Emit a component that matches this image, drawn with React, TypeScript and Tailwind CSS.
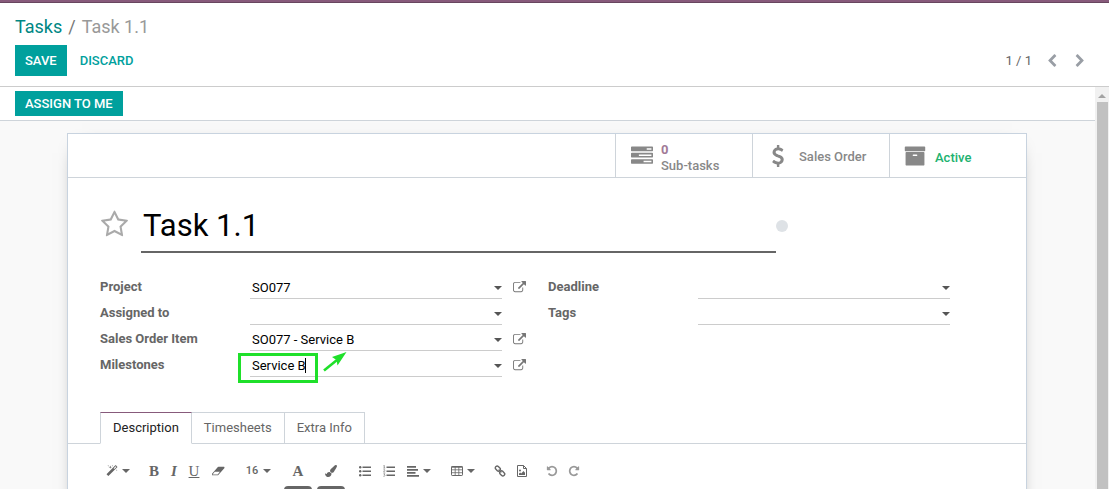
import { useState, type ReactNode } from "react";

const PATHS = {
  tasks:
    "M1024 1408h640v-128h-640v128zm-384-512h1024v-128h-1024v128zm640-512h384v-128h-384v128zm512 832v256q0 26-19 45t-45 19h-1664q-26 0-45-19t-19-45v-256q0-26 19-45t45-19h1664q26 0 45 19t19 45zm0-512v256q0 26-19 45t-45 19h-1664q-26 0-45-19t-19-45v-256q0-26 19-45t45-19h1664q26 0 45 19t19 45zm0-512v256q0 26-19 45t-45 19h-1664q-26 0-45-19t-19-45v-256q0-26 19-45t45-19h1664q26 0 45 19t19 45z",
  dollar:
    "M1362 1185q0 153-99.5 263.5t-258.5 136.5v175q0 14-9 23t-23 9h-135q-13 0-22.5-9.5t-9.5-22.5v-175q-66-9-127.5-31t-101.5-44.5-74-48-46.5-37.5-17.5-18q-17-21-2-41l103-135q7-10 23-12 15-2 24 9l2 2q113 99 243 125 37 8 74 8 81 0 142.5-43t61.5-122q0-28-15-53t-33.5-42-58.5-37.5-66-32-80-32.5q-39-16-61.5-25t-61.5-26.5-62.5-31-56.5-35.5-53.5-42.5-43.5-49-35.5-58-21-66.5-8.5-78q0-138 98-242t255-134v-180q0-13 9.5-22.5t22.5-9.5h135q14 0 23 9t9 23v176q57 6 110.5 23t87 33.5 63.5 37.5 39 29 15 14q17 18 5 38l-81 146q-8 15-23 16-14 3-27-7-3-3-14.5-12t-39-26.5-58.5-32-74.5-26-85.5-11.5q-95 0-155 43t-60 111q0 26 8.5 48t29.5 41.5 39.5 33 56 31 60.5 27 70 27.5q53 20 81 31.5t76 35 75.5 42.5 62 50 53 63.5 31.5 76.5 13 94z",
  archive:
    "M1088 832q0-26-19-45t-45-19h-256q-26 0-45 19t-19 45 19 45 45 19h256q26 0 45-19t19-45zm576-192v960q0 26-19 45t-45 19h-1408q-26 0-45-19t-19-45v-960q0-26 19-45t45-19h1408q26 0 45 19t19 45zm64-448v256q0 26-19 45t-45 19h-1536q-26 0-45-19t-19-45v-256q0-26 19-45t45-19h1536q26 0 45 19t19 45z",
  external:
    "M1408 928v320q0 119-84.5 203.5t-203.5 84.5h-832q-119 0-203.5-84.5t-84.5-203.5v-832q0-119 84.5-203.5t203.5-84.5h704q14 0 23 9t9 23v64q0 14-9 23t-23 9h-704q-66 0-113 47t-47 113v832q0 66 47 113t113 47h832q66 0 113-47t47-113v-320q0-14 9-23t23-9h64q14 0 23 9t9 23zm384-864v512q0 26-19 45t-45 19-45-19l-176-176-652 652q-10 10-23 10t-23-10l-114-114q-10-10-10-23t10-23l652-652-176-176q-19-19-19-45t19-45 45-19h512q26 0 45 19t19 45z",
  star:
    "M1201 1004l306-297-422-62-189-382-189 382-422 62 306 297-73 421 378-199 377 199zm527-357q0 22-26 48l-363 354 86 500q1 7 1 20 0 50-41 50-19 0-40-12l-449-236-449 236q-22 12-40 12-21 0-31.5-14.5t-10.5-35.5q0-6 2-20l86-500-364-354q-25-27-25-48 0-37 56-46l502-73 225-455q19-41 49-41t49 41l225 455 502 73q56 9 56 46z",
  left:
    "M1427 301l-531 531 531 531q19 19 19 45t-19 45l-166 166q-19 19-45 19t-45-19l-742-742q-19-19-19-45t19-45l742-742q19-19 45-19t45 19l166 166q19 19 19 45t-19 45z",
  right:
    "M1363 877l-742 742q-19 19-45 19t-45-19l-166-166q-19-19-19-45t19-45l531-531-531-531q-19-19-19-45t19-45l166-166q19-19 45-19t45 19l742 742q19 19 19 45t-19 45z",
  magic:
    "M1254 581l293-293-107-107-293 293zm447-293q0 27-18 45l-1286 1286q-18 18-45 18t-45-18l-198-198q-18-18-18-45t18-45l1286-1286q18-18 45-18t45 18l198 198q18 18 18 45zm-1351-190l98 30-98 30-30 98-30-98-98-30 98-30 30-98zm350 162l196 60-196 60-60 196-60-196-196-60 196-60 60-196zm930 478l98 30-98 30-30 98-30-98-98-30 98-30 30-98zm-640-640l98 30-98 30-30 98-30-98-98-30 98-30 30-98z",
  brush:
    "M1615 0q70 0 122.5 46.5t52.5 116.5q0 63-45 151-332 629-465 752-97 91-218 91-126 0-216.5-92.5t-90.5-219.5q0-128 92-212l638-579q59-54 130-54zm-909 1034q39 76 106.5 130t150.5 76l1 71q4 213-129.5 347t-348.5 134q-123 0-218-46.5t-152.5-127.5-86.5-183-29-220q7 5 41 30t62 44.5 59 36.5 46 17q41 0 55-37 25-66 57.5-112.5t69.5-76 88-47.5 103-25.5 125-10.5z",
  repeat:
    "M1664 256v448q0 26-19 45t-45 19h-448q-42 0-59-40-17-39 14-69l138-138q-148-137-349-137-104 0-198.5 40.5t-163.5 109.5-109.5 163.5-40.5 198.5 40.5 198.5 109.5 163.5 163.5 109.5 198.5 40.5q119 0 225-52t179-147q7-10 23-12 15 0 25 9l137 138q9 8 9.5 20.5t-7.5 22.5q-109 132-264 204.5t-327 72.5q-156 0-298-61t-245-164-164-245-61-298 61-298 164-245 245-164 298-61q147 0 284.5 55.5t244.5 156.5l130-129q29-31 70-14 39 17 39 59z",
};

function Icon({ name, className }: { name: keyof typeof PATHS; className: string }) {
  return (
    <svg viewBox="0 0 1792 1792" fill="currentColor" className={className} aria-hidden="true">
      <path d={PATHS[name]} />
    </svg>
  );
}

function Caret({ className = "" }: { className?: string }) {
  return (
    <svg viewBox="0 0 8 4" fill="currentColor" className={`h-1 w-2 shrink-0 ${className}`} aria-hidden="true">
      <path d="M0 0h8L4 4z" />
    </svg>
  );
}

function EraserIcon() {
  return (
    <svg viewBox="0 0 1920 1792" fill="currentColor" className="h-3 w-[13px]" aria-hidden="true">
      <path d="M832 1408l336-384h-768l-336 384h768zm1013-1077q15 34 9.5 71.5t-30.5 65.5l-896 1024q-38 44-96 44h-768q-38 0-69.5-20.5t-47.5-54.5q-15-34-9.5-71.5t30.5-65.5l896-1024q38-44 96-44h768q38 0 69.5 20.5t47.5 54.5z" />
    </svg>
  );
}

function BulletsIcon() {
  return (
    <svg viewBox="0 0 12 12" fill="currentColor" className="size-3" aria-hidden="true">
      <circle cx="1.2" cy="2.2" r="1.2" />
      <circle cx="1.2" cy="6.2" r="1.2" />
      <circle cx="1.2" cy="10.2" r="1.2" />
      <path d="M3.5 1.4H12v1.7H3.5zM3.5 5.4H12v1.7H3.5zM3.5 9.4H12v1.7H3.5z" />
    </svg>
  );
}

function NumbersIcon() {
  return (
    <svg viewBox="0 0 12 12" fill="currentColor" className="size-3" aria-hidden="true">
      <path d="M3.5 1.4H12v1.7H3.5zM3.5 5.4H12v1.7H3.5zM3.5 9.4H12v1.7H3.5z" />
      <path
        d="M.4.9 1.3.3V3M.4 3.1h1.8M.4 4.9q1.7-.8 1.4.5L.5 7.1h1.7M.4 8.8h1.6l-.8 1q1 .1.8.9-.4 1-1.6.5"
        fill="none"
        stroke="currentColor"
        strokeWidth=".6"
      />
    </svg>
  );
}

function AlignIcon() {
  return (
    <svg viewBox="0 0 12 12" fill="currentColor" className="size-3" aria-hidden="true">
      <path d="M0 1h9v1.7H0zM0 4h11v1.7H0zM0 7h8.500v1.700H0zM0 10h12v1.700H0z" />
    </svg>
  );
}

function TableIcon() {
  return (
    <svg viewBox="0 0 12 12" className="size-3" fill="none" stroke="currentColor" aria-hidden="true">
      <rect x=".5" y="1.5" width="11" height="9" rx=".7" />
      <path d="M.5 2h11" strokeWidth="1.4" />
      <path d="M.5 4.8h11M.5 7.7h11M4.2 2v8.5M7.8 2v8.5" strokeWidth=".8" />
    </svg>
  );
}

function LinkIcon() {
  return (
    <svg viewBox="0 0 12 12" className="size-3" fill="none" stroke="currentColor" strokeWidth="1.4" aria-hidden="true">
      <rect x="1.100" y="1.800" width="5.400" height="3.600" rx="1.600" transform="rotate(45 3.800 3.600)" />
      <rect x="5.500" y="6.600" width="5.400" height="3.600" rx="1.600" transform="rotate(45 8.200 8.400)" />
      <path d="m4.600 4.600 2.800 2.800" strokeWidth="1.300" />
    </svg>
  );
}

function ImageIcon() {
  return (
    <svg viewBox="0 0 12 12" className="size-3" fill="none" stroke="currentColor" aria-hidden="true">
      <path d="M1.500.5h6l3 3v8h-9zM7.500.5v3h3" />
      <circle cx="4" cy="5.600" r="1" fill="currentColor" stroke="none" />
      <path d="M3 10V8.600l1.200-1 1 1L7.500 6 9 7.800V10z" fill="currentColor" stroke="none" />
    </svg>
  );
}

function StatButton({ icon, children }: { icon: ReactNode; children: ReactNode }) {
  return (
    <button className="flex h-[43px] items-center border-l border-[#ced4da] text-left text-[13px] leading-4 font-medium text-[#888]">
      {icon}
      {children}
    </button>
  );
}

const LABEL = "w-[150px] shrink-0 pt-0.5 text-[13px] font-bold text-[#666]";
const CONTROL =
  "h-[26px] w-full appearance-none border-b border-[#ccc] bg-transparent px-0.5 pt-1 text-[13px] text-black outline-none";

function Field({ id, label, value, open, children }: { id: string; label: string; value?: string; open?: boolean; children?: ReactNode }) {
  return (
    <div className="flex h-[26px] items-center">
      <label htmlFor={id} className={LABEL}>
        {label}
      </label>
      <div className="relative w-[252px]">
        {children ?? (
          <select id={id} defaultValue={value ?? ""} className={CONTROL}>
            <option>{value ?? ""}</option>
          </select>
        )}
        <Caret className="pointer-events-none absolute top-[13px] right-0 text-[#555]" />
      </div>
      {open && (
        <button aria-label={`Open ${label}`} className="ml-[11px] pt-[3px] text-[#777]">
          <Icon name="external" className="size-[13px]" />
        </button>
      )}
    </div>
  );
}

function Tool({ label, className, children }: { label: string; className: string; children: ReactNode }) {
  return (
    <button aria-label={label} className={`flex h-[30px] items-center justify-center ${className}`}>
      {children}
    </button>
  );
}

const TABS = ["Description", "Timesheets", "Extra Info"];

export default function App() {
  const [tab, setTab] = useState("Description");

  return (
    <div className="flex h-screen flex-col overflow-hidden bg-white font-[Roboto,sans-serif] text-[13px] text-[#666]">
      <div className="h-[3px] shrink-0 border-b border-[#68465f] bg-[#875a7b]" />

      <header className="shrink-0 border-b border-[#ccc] px-[15px] pt-3 pb-[10px]">
        <nav className="flex h-[30px] items-start text-[18px] leading-6">
          <a href="#tasks" className="text-[#008784]">
            Tasks
          </a>
          <span className="px-1.5 text-[#777]">/</span>
          <span className="text-[#999]">Task 1.1</span>
        </nav>
        <div className="flex items-center justify-between">
          <div className="flex items-center">
            <button className="h-[31px] bg-[#00a09d] px-[10px] font-medium text-white">SAVE</button>
            <button className="h-[31px] px-[13px] font-medium text-[#00a09d]">DISCARD</button>
          </div>
          <div className="flex items-center pr-[7px]">
            <span>1 / 1</span>
            <button aria-label="Previous" className="ml-[13px] text-[#999ea5]">
              <Icon name="left" className="size-[14px]" />
            </button>
            <button aria-label="Next" className="ml-[14px] text-[#999ea5]">
              <Icon name="right" className="size-[14px]" />
            </button>
          </div>
        </div>
      </header>

      <div className="flex min-h-0 flex-1">
        <main className="min-w-0 flex-1 overflow-hidden bg-[#f9f9f9]">
          <div className="border-b border-[#ced4da] bg-white px-[15px] py-1">
            <button className="h-[25px] bg-[#00a09d] px-[10px] font-medium text-white">ASSIGN TO ME</button>
          </div>

          <div className="pt-3 pr-px">
            <div className="mx-auto min-h-[500px] w-[960px] max-w-full border border-[#c8d3df] bg-white shadow-[0_5px_20px_-15px_#000]">
              <div className="grid grid-cols-[137px_137px_137px] justify-end border-b border-[#ced4da]">
                <StatButton icon={<Icon name="tasks" className="mr-2 ml-[15px] size-[22px]" />}>
                  <span className="pt-[5px]">
                    <span className="block font-bold text-[#a17a97]">0</span>
                    Sub-tasks
                  </span>
                </StatButton>
                <StatButton icon={<Icon name="dollar" className="mr-[10px] ml-[14px] size-[22px]" />}>
                  <span className="pt-[3px]">Sales Order</span>
                </StatButton>
                <StatButton icon={<Icon name="archive" className="mr-[9px] ml-[14px] size-[22px]" />}>
                  <span className="pt-[5px] text-[#21b26f]">Active</span>
                </StatButton>
              </div>

              <div className="px-8 pt-5">
                <div className="flex items-center">
                  <button aria-label="Priority" className="w-[41px] pb-[3px] text-[#aaa]">
                    <Icon name="star" className="size-[29px]" />
                  </button>
                  <input
                    aria-label="Task title"
                    defaultValue="Task 1.1"
                    className="h-[55px] w-[635px] border-b-2 border-[#666] px-0.5 pt-0.5 text-[31px] text-black outline-none"
                  />
                  <button aria-label="Kanban state" className="size-3 rounded-full bg-[#dee2e6]" />
                </div>

                <div className="flex gap-[22px] pt-5">
                  <div>
                    <Field id="project" label="Project" value="SO077" open />
                    <Field id="assigned" label="Assigned to" />
                    <Field id="item" label="Sales Order Item" value="SO077 - Service B" open />
                    <Field id="milestones" label="Milestones" open>
                      <input id="milestones" role="combobox" aria-expanded="false" defaultValue="Service B" className={CONTROL} />
                      <span className="absolute top-[7px] left-[55px] h-[15px] w-px bg-black" />
                      <span className="pointer-events-none absolute top-[2px] -left-3 h-[30px] w-20 border-[3px] border-[#1fe02a]" />
                      <svg viewBox="0 0 24 22" className="pointer-events-none absolute top-0 left-[73px] h-[22px] w-6" aria-hidden="true">
                        <path d="M1 19.5 14 9" stroke="#1fe02a" strokeWidth="2.6" fill="none" />
                        <path d="M23.5 1 9 6l4.500 3 1 5.500z" fill="#1fe02a" />
                      </svg>
                    </Field>
                  </div>
                  <div>
                    <Field id="deadline" label="Deadline" />
                    <Field id="tags" label="Tags" />
                  </div>
                </div>
              </div>

              <div role="tablist" className="mt-[35px] flex border-b border-[#ced4da] pl-8">
                {TABS.map((name) => (
                  <button
                    key={name}
                    role="tab"
                    aria-selected={tab === name}
                    onClick={() => setTab(name)}
                    className={
                      tab === name
                        ? "-mb-px h-8 border border-t-[#875a7b] border-r-[#ced4da] border-b-white border-l-[#ced4da] bg-white px-3 text-[#222]"
                        : "h-[31px] border-t border-r border-[#ced4da] px-3 text-[#666]"
                    }
                  >
                    {name}
                  </button>
                ))}
              </div>

              <div className="flex items-start gap-2 pt-3 pl-8 text-[#666]">
                <Tool label="Style" className="w-9 gap-1">
                  <Icon name="magic" className="size-3" />
                  <Caret />
                </Tool>
                <div className="flex font-['Liberation_Serif',serif] text-[15px]">
                  <Tool label="Bold" className="w-5 font-bold">B</Tool>
                  <Tool label="Italic" className="w-5 font-bold italic">I</Tool>
                  <Tool label="Underline" className="w-5 underline">U</Tool>
                  <Tool label="Remove format" className="w-7">
                    <EraserIcon />
                  </Tool>
                </div>
                <Tool label="Font size" className="w-9 gap-1 text-[11px] font-medium">
                  <span className="w-[14px]">16</span>
                  <Caret />
                </Tool>
                <div className="flex gap-[5px]">
                  <div>
                    <Tool label="Text color" className="w-7 font-['Liberation_Serif',serif] text-[15px] font-bold">A</Tool>
                    <div className="h-1 rounded-t-sm bg-[#666]" />
                  </div>
                  <div>
                    <Tool label="Highlight" className="w-7">
                      <Icon name="brush" className="size-3" />
                    </Tool>
                    <div className="h-1 rounded-t-sm bg-[#666]" />
                  </div>
                </div>
                <div className="flex">
                  <Tool label="Bulleted list" className="w-6"><BulletsIcon /></Tool>
                  <Tool label="Numbered list" className="w-6"><NumbersIcon /></Tool>
                  <Tool label="Align" className="w-9 gap-1"><AlignIcon /><Caret /></Tool>
                </div>
                <Tool label="Table" className="w-9 gap-1"><TableIcon /><Caret /></Tool>
                <div className="flex">
                  <Tool label="Link" className="w-[22px]"><LinkIcon /></Tool>
                  <Tool label="Image" className="w-[22px]"><ImageIcon /></Tool>
                </div>
                <div className="flex text-[#999]">
                  <Tool label="Undo" className="w-[22px]"><Icon name="repeat" className="size-3 -scale-x-100" /></Tool>
                  <Tool label="Redo" className="w-[22px]"><Icon name="repeat" className="size-3" /></Tool>
                </div>
              </div>
            </div>
          </div>
        </main>

        <div className="flex w-[14px] shrink-0 flex-col items-center bg-[#f1f1f1]" aria-hidden="true">
          <div className="flex h-[15px] shrink-0 items-center pt-0.5">
            <Caret className="rotate-180 text-[#a3a3a3]" />
          </div>
          <div className="w-[11px] flex-1 bg-[#c1c1c1]" />
        </div>
      </div>
    </div>
  );
}
